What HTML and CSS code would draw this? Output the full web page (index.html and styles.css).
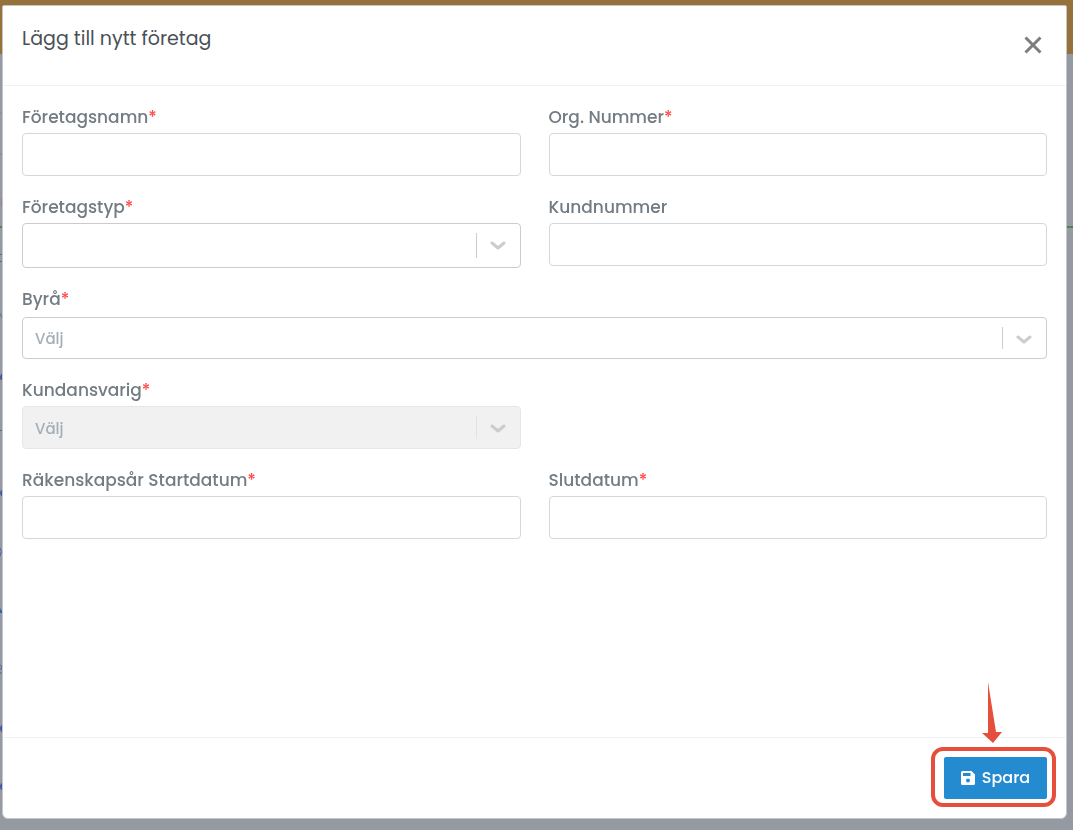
FILE: index.html
```html
<!DOCTYPE html>
<html lang="sv">
    <head>
        <meta charset="utf-8">
        <meta name="viewport" content="width=device-width, initial-scale=1">
        <title>Lägg till nytt företag</title>
        <link rel="stylesheet" href="styles.css">
    </head>
    <body>
        <!-- Page edge behind the dialog -->
        <div class="backdrop">
            <div class="topbar"></div>
            <div class="tab-line"></div>
            <svg class="edge" width="3" height="830" viewBox="0 0 3 830" fill="none" aria-hidden="true">
                <path d="M0 113h3M0 154h3" stroke="#858992"/>
                <path d="M2 198v8" stroke="#a56f6b"/>
                <path d="M0 254.500h3M0 261.500h3M0 430.500h3" stroke="#4f719f"/>
                <path d="M0 313l2 5M2 374l-2 6" stroke="#6b6f96"/>
                <path d="M3 374q-4 3 0 6M3 490q-4 3 0 6M3 725q-4 4 0 7M3 783q-4 4 0 7" stroke="#3f56a0" stroke-width="2"/>
                <path d="M0 548q3 3 0 8M0 669h2q0-4-2-4M0 673h2" stroke="#5662a0"/>
                <path d="M0 608l3 5H0z" fill="#2f66a8"/>
            </svg>
        </div>

        <form class="modal" role="dialog" aria-labelledby="modalTitle">
            <div class="modal-header">
                <h1 id="modalTitle">Lägg till nytt företag</h1>
                <button type="button" class="close" aria-label="Stäng">
                    <svg width="18" height="18" viewBox="0 0 18 18" aria-hidden="true">
                        <path d="M1.500 1.500l15 15M16.500 1.500l-15 15" fill="none" stroke="#7d7d7d" stroke-width="3"/>
                    </svg>
                </button>
            </div>

            <div class="modal-body">
                <div class="field">
                    <label for="companyName">Företagsnamn<span class="required">*</span></label>
                    <input type="text" id="companyName">
                </div>
                <div class="field">
                    <label for="orgNumber">Org. Nummer<span class="required">*</span></label>
                    <input type="text" id="orgNumber">
                </div>

                <div class="field">
                    <label for="companyType">Företagstyp<span class="required">*</span></label>
                    <div class="select select-tall">
                        <select id="companyType">
                            <option value=""></option>
                        </select>
                        <svg class="chevron" width="16" height="10" viewBox="0 0 16 10" aria-hidden="true"><path d="M2 2l6 5 6-5"/></svg>
                    </div>
                </div>
                <div class="field">
                    <label for="customerNumber">Kundnummer</label>
                    <input type="text" id="customerNumber">
                </div>

                <div class="field field-wide">
                    <label for="agency">Byrå<span class="required">*</span></label>
                    <div class="select">
                        <select id="agency">
                            <option value="">Välj</option>
                        </select>
                        <svg class="chevron" width="16" height="10" viewBox="0 0 16 10" aria-hidden="true"><path d="M2 2l6 5 6-5"/></svg>
                    </div>
                </div>

                <div class="field">
                    <label for="manager">Kundansvarig<span class="required">*</span></label>
                    <div class="select select-disabled">
                        <select id="manager" disabled>
                            <option value="">Välj</option>
                        </select>
                        <svg class="chevron" width="16" height="10" viewBox="0 0 16 10" aria-hidden="true"><path d="M2 2l6 5 6-5"/></svg>
                    </div>
                </div>

                <div class="field field-start">
                    <label for="startDate">Räkenskapsår Startdatum<span class="required">*</span></label>
                    <input type="text" id="startDate">
                </div>
                <div class="field">
                    <label for="endDate">Slutdatum<span class="required">*</span></label>
                    <input type="text" id="endDate">
                </div>
            </div>

            <div class="modal-footer">
                <div class="save-wrap">
                    <button type="submit" class="save">
                        <svg width="14" height="14" viewBox="0 0 14 14" aria-hidden="true">
                            <path fill="#fff" fill-rule="evenodd" d="M1.500 0H10.500L14 3.500V12.500Q14 14 12.500 14H1.500Q0 14 0 12.500V1.500Q0 0 1.500 0zM2 2V5H9.500V2zM7 7.500A2 2 0 1 0 7 11.500A2 2 0 1 0 7 7.500z"/>
                        </svg>
                        Spara
                    </button>
                    <div class="highlight"></div>
                    <svg class="arrow" width="20" height="61" viewBox="0 0 20 61" aria-hidden="true">
                        <path fill="#e64f3c" d="M6 0L14 50L20 50L11 61L0 51L6 51z"/>
                    </svg>
                </div>
            </div>
        </form>
    </body>
</html>
```
FILE: styles.css
```css
* {
    box-sizing: border-box;
}

body {
    margin: 0;
    min-height: 100vh;
    display: flex;
    background: #9599a2;
    color: #737b83;
    font-family: Poppins, Inter, sans-serif;
    font-size: 15px;
    line-height: 24px;
}

.backdrop {
    position: fixed;
    inset: 0;
    z-index: -1;
    overflow: hidden;
}

.topbar {
    height: 54px;
    background: #97713a;
}

.tab-line {
    height: 2px;
    margin-top: 172px;
    background: #4f8550;
}

.edge {
    position: absolute;
    top: 0;
    left: 0;
}

.modal {
    flex: 1;
    display: flex;
    flex-direction: column;
    margin: 5px 6px 11px 2px;
    background: #fff;
    border: 1px solid #c3c6cb;
    border-radius: 2px 2px 6px 6px;
}

.modal-header {
    display: flex;
    justify-content: space-between;
    align-items: flex-start;
    height: 80px;
    padding: 21px 19px;
    border-bottom: 1px solid #f1f2f4;
}

h1 {
    margin: 0;
    color: #495057;
    font-size: 19px;
    font-weight: 400;
    line-height: 24px;
}

.close {
    display: flex;
    padding: 9px 5px;
    border: 0;
    background: none;
    cursor: pointer;
}

.modal-body {
    flex: 1;
    display: grid;
    grid-template-columns: 1fr 1fr;
    align-content: start;
    gap: 19px 28px;
    padding: 19px;
}

.field {
    display: flex;
    flex-direction: column;
    gap: 4px;
}

.field-wide {
    grid-column: 1 / -1;
    gap: 6px;
}

.field-start {
    grid-column-start: 1;
}

label {
    font-size: 17px;
    font-weight: 500;
}

.required {
    color: #ff4d4d;
}

input,
select {
    width: 100%;
    height: 43px;
    padding: 0 12px;
    border: 1px solid #d3d8de;
    border-radius: 4px;
    background: #fff;
    color: #a3afb7;
    font: inherit;
    font-weight: 500;
}

.select {
    position: relative;
    display: flex;
}

select {
    appearance: none;
    border-color: #ccc;
    padding: 2px 56px 0 12px;
    opacity: 1;
}

.select-tall select {
    height: 45px;
}

.field-wide select {
    height: 42px;
}

.select::after {
    content: "";
    position: absolute;
    top: 10px;
    bottom: 10px;
    right: 44px;
    width: 1px;
    background: #ccc;
}

.chevron {
    position: absolute;
    top: 18px;
    right: 15px;
    fill: none;
    stroke: #ccc;
    stroke-width: 3;
    stroke-linecap: round;
    stroke-linejoin: round;
    pointer-events: none;
}

.select-disabled select {
    background: #f1f1f1;
    border-color: #e6e6e6;
}

.select-disabled::after {
    background: #e2e2e2;
}

.modal-footer {
    display: flex;
    justify-content: flex-end;
    padding: 19px;
    border-top: 1px solid #f1f2f4;
}

.save-wrap {
    position: relative;
}

.save {
    display: flex;
    align-items: center;
    justify-content: center;
    gap: 7px;
    width: 103px;
    height: 42px;
    padding: 0;
    border: 0;
    border-radius: 2px;
    background: #258bd0;
    color: #fff;
    font: inherit;
    font-size: 16px;
    font-weight: 500;
    cursor: pointer;
}

/* Callout around the save button */
.highlight {
    position: absolute;
    inset: -10px -9px -8px -13px;
    border: 4px solid #e64f3c;
    border-radius: 12px;
    pointer-events: none;
}

.arrow {
    position: absolute;
    left: 38px;
    bottom: 56px;
    pointer-events: none;
}
```
